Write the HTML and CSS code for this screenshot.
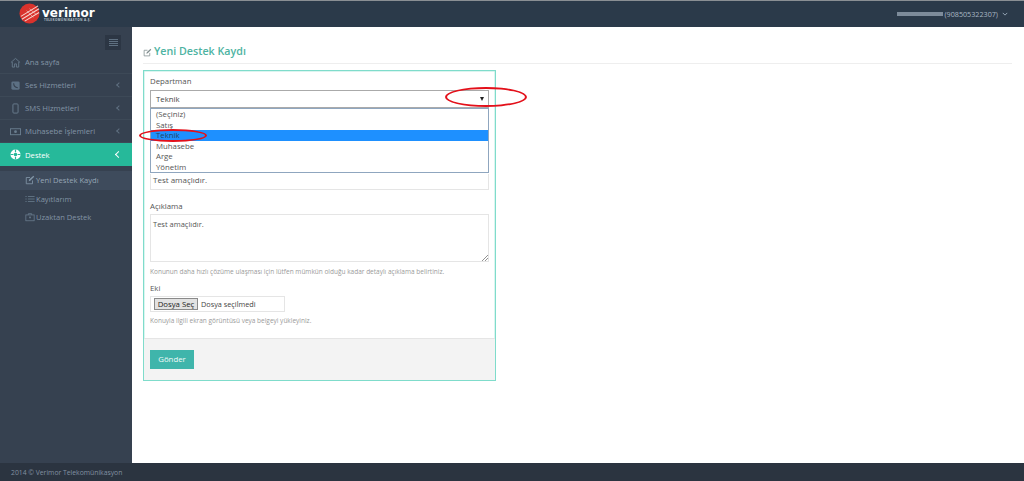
FILE: index.html
```html
<!DOCTYPE html>
<html lang="tr">
<head>
<meta charset="utf-8">
<title>Yeni Destek Kaydı</title>
<link rel="stylesheet" href="styles.css">
</head>
<body>
<div class="app">
  <header class="topbar">
    <div class="logo">
      <svg class="logo-mark" viewBox="0 0 22 22" width="21" height="21">
        <circle cx="11" cy="11" r="10.5" fill="#d9322c"/>
        <path d="M2 14 L20 3 M3 17 L21 6 M6 19 L21 10" stroke="#f6d5cf" stroke-width="1.1" fill="none"/>
        <path d="M8 8 L15 15 M11 6 L18 12" stroke="#f6d5cf" stroke-width=".6" fill="none"/>
      </svg>
      <div class="logo-text">
        <span class="logo-name">verimor</span>
        <span class="logo-sub">TELEKOMÜNİKASYON A.Ş.</span>
      </div>
    </div>
    <div class="user">
      <span class="user-mask"></span><span class="user-num">(908505322307)</span>
      <svg class="user-caret" viewBox="0 0 8 5" width="6" height="4"><path d="M1 1 L4 4 L7 1" stroke="#9fb0bf" stroke-width="1.2" fill="none"/></svg>
    </div>
  </header>
  <div class="middle">
    <aside class="sidebar">
      <div class="toggler-row">
        <div class="toggler"><span></span><span></span><span></span><span></span></div>
      </div>
      <nav class="menu">
        <a class="item">
          <svg class="ic" viewBox="0 0 12 12"><path d="M1 6 L6 1.5 L11 6 M2.5 5.5 V11 H5 V7.5 H7 V11 H9.5 V5.5" fill="none" stroke="#6b7f90" stroke-width=".9"/></svg>
          <span>Ana sayfa</span>
        </a>
        <a class="item">
          <svg class="ic" viewBox="0 0 12 12"><rect x="1.5" y="1.5" width="9" height="9" rx="1.5" fill="#5c7084"/><path d="M4 3.5 C4 6 6 8 8.5 8.5" stroke="#364150" stroke-width="1.2" fill="none"/></svg>
          <span>Ses Hizmetleri</span><i class="chev"></i>
        </a>
        <a class="item">
          <svg class="ic" viewBox="0 0 12 12"><rect x="3.2" y="1" width="5.6" height="10" rx="1" fill="none" stroke="#6b7f90" stroke-width="1"/></svg>
          <span>SMS Hizmetleri</span><i class="chev"></i>
        </a>
        <a class="item">
          <svg class="ic" viewBox="0 0 12 12"><rect x=".5" y="3" width="11" height="6.5" fill="none" stroke="#6b7f90" stroke-width="1"/><circle cx="6" cy="6.2" r="1.5" fill="#6b7f90"/></svg>
          <span>Muhasebe İşlemleri</span><i class="chev"></i>
        </a>
        <a class="item active">
          <svg class="ic" viewBox="0 0 12 12"><circle cx="6" cy="6" r="5.5" fill="#fff"/><circle cx="6" cy="6" r="2" fill="#26b99a"/><path d="M6 .5 V3.5 M6 8.5 V11.5 M.5 6 H3.5 M8.5 6 H11.5" stroke="#26b99a" stroke-width="1.3"/></svg>
          <span>Destek</span><i class="chev"></i>
        </a>
      </nav>
      <ul class="submenu">
        <li class="sub current">
          <svg class="ic-sm" viewBox="0 0 12 12"><path d="M9 6.5 V10.5 H1.5 V3 H6" fill="none" stroke="#8296a8" stroke-width="1"/><path d="M4.5 7.5 L5 5.5 L10 1 L11 2.2 L6.3 7 Z" fill="#8296a8"/></svg>
          <span>Yeni Destek Kaydı</span>
        </li>
        <li class="sub">
          <svg class="ic-sm" viewBox="0 0 12 12"><path d="M.5 3 H2 M3.5 3 H11.5 M.5 6 H2 M3.5 6 H11.5 M.5 9 H2 M3.5 9 H11.5" stroke="#66798a" stroke-width="1"/></svg>
          <span>Kayıtlarım</span>
        </li>
        <li class="sub">
          <svg class="ic-sm" viewBox="0 0 12 12"><rect x="1" y="3.5" width="10" height="7" fill="none" stroke="#66798a" stroke-width="1"/><path d="M4 3.5 V2 H8 V3.5" fill="none" stroke="#66798a"/><rect x="5" y="5.5" width="2" height="2" fill="#66798a"/></svg>
          <span>Uzaktan Destek</span>
        </li>
      </ul>
    </aside>
    <main class="content">
      <h1 class="page-title">
        <svg class="title-ic" viewBox="0 0 12 12"><path d="M9 6.5 V10.5 H1.5 V3 H6" fill="none" stroke="#7f8c8d" stroke-width="1"/><path d="M4.5 7.5 L5 5.5 L10 1 L11 2.2 L6.3 7 Z" fill="#7f8c8d"/></svg>
        Yeni Destek Kaydı
      </h1>
      <form class="box">
        <div class="body">
          <label class="lbl">Departman</label>
          <div class="select-wrap">
            <div class="select"><span>Teknik</span><i class="arrow"></i></div>
            <ul class="options">
              <li>(Seçiniz)</li>
              <li>Satış</li>
              <li class="sel">Teknik</li>
              <li>Muhasebe</li>
              <li>Arge</li>
              <li>Yönetim</li>
            </ul>
          </div>
          <div class="subject">Test amaçlıdır.</div>
          <label class="lbl lbl-desc">Açıklama</label>
          <div class="textarea">Test amaçlıdır.
            <svg class="grip" viewBox="0 0 7 7" width="7" height="7"><path d="M1 7 L7 1 M4 7 L7 4" stroke="#777" stroke-width=".8"/></svg>
          </div>
          <p class="help help-a">Konunun daha hızlı çözüme ulaşması için lütfen mümkün olduğu kadar detaylı açıklama belirtiniz.</p>
          <label class="lbl lbl-eki">Eki</label>
          <div class="file"><span class="file-btn">Dosya Seç</span><span class="file-txt">Dosya seçilmedi</span></div>
          <p class="help help-b">Konuyla ilgili ekran görüntüsü veya belgeyi yükleyiniz.</p>
        </div>
        <div class="actions"><span class="send">Gönder</span></div>
      </form>
    </main>
  </div>
  <footer class="foot">2014 © Verimor Telekomünikasyon</footer>
  <span class="mark mark-arrow"></span>
  <span class="mark mark-opt"></span>
</div>
</body>
</html>
```
FILE: styles.css
```css
* { box-sizing: border-box; }
html, body { margin: 0; padding: 0; height: 100%; }
body { font-family: "Open Sans", sans-serif; font-size: 7.8px; color: #555; background: #fff; overflow: hidden; }
.app { position: relative; height: 481px; display: flex; flex-direction: column; }

.topbar { height: 27px; flex: none; background: #2b3a4a; border-top: 1px solid #8a8f94; display: flex; justify-content: space-between; align-items: center; padding: 0 16px 0 19px; }
.logo { display: flex; align-items: center; gap: 2px; }
.logo-mark { display: block; margin-top: -1px; }
.logo-text { display: flex; flex-direction: column; line-height: 1; }
.logo-name { font-family: "DejaVu Sans", sans-serif; font-weight: 700; font-size: 12px; color: #fff; height: 12px; letter-spacing: 0; }
.logo-sub { font-family: "Open Sans", sans-serif; font-weight: 700; font-size: 3px; letter-spacing: .42px; color: #b9c2cb; margin-left: 2px; }
.user { display: flex; align-items: center; color: #a9b7c3; font-size: 7.2px; }
.user-mask { width: 46px; height: 4px; background: #7d8b9a; margin-right: 1px; }
.user-caret { margin-left: 4px; }

.middle { flex: 1; display: flex; min-height: 0; }
.sidebar { width: 132px; flex: none; background: #364150; }
.toggler-row { display: flex; justify-content: flex-end; padding: 8px 11px 0 0; height: 24px; }
.toggler { width: 16px; height: 15px; background: #2c3644; display: flex; flex-direction: column; justify-content: center; align-items: center; gap: 1px; }
.toggler span { width: 9px; height: 1px; background: #5f7081; }
.menu { display: flex; flex-direction: column; }
.item { height: 23px; display: flex; align-items: center; color: #8294a5; padding-left: 10px; border-bottom: 1px solid #3d4957; position: relative; font-size: 7.7px; }
.item .ic { width: 11px; height: 11px; margin-right: 4px; flex: none; }
.item > span { flex: 1; }
.chev { width: 4px; height: 4px; border-left: 1px solid #5f7081; border-bottom: 1px solid #5f7081; transform: rotate(45deg); margin-right: 11px; }
.item.active { background: #26b99a; color: #fff; border-bottom: 0; }
.item.active .chev { border-color: #fff; border-width: 1.5px; width: 5px; height: 5px; }
.submenu { list-style: none; margin: 5px 0 0; padding: 0; }
.sub { height: 18.5px; display: flex; align-items: center; padding-left: 25px; color: #8294a5; font-size: 7.6px; }
.sub.current { background: #3e4b5c; color: #96a6b5; }
.ic-sm { width: 10px; height: 10px; margin-right: 1px; flex: none; }

.content { flex: 1; padding: 17px 12px 0 11px; min-width: 0; }
.page-title { margin: 0; height: 20px; border-bottom: 1px solid #eee; font-size: 10.7px; font-weight: 600; color: #4db3a2; display: flex; align-items: flex-start; gap: 2px; line-height: 14px; }
.title-ic { width: 9px; height: 9px; margin-top: 4px; flex: none; }
.box { margin-top: 6px; width: 353px; height: 311px; border: 1px solid #7fdccb; box-shadow: inset 0 0 0 .5px #b8ece2; display: flex; flex-direction: column; }
.body { flex: 1; padding: 5px 6px 0; }
.lbl { display: block; font-size: 7.8px; line-height: 10px; color: #555; }
.select-wrap { position: relative; margin-top: 4px; height: 18px; width: 339px; }
.select { height: 18px; border: 1px solid #aaa; padding-left: 5px; display: flex; align-items: center; justify-content: space-between; color: #444; }
.arrow { width: 0; height: 0; border-left: 2.5px solid transparent; border-right: 2.5px solid transparent; border-top: 4px solid #222; margin-right: 4px; }
.options { position: absolute; left: 0; right: 0; top: 18px; height: 65px; margin: 0; padding: 0; list-style: none; background: #fff; border: 1px solid #8fa6bf; color: #555; }
.options li { height: 10.6px; line-height: 10.6px; padding-left: 5px; }
.options li.sel { background: #1e90ff; color: #26425c; }
.subject { margin-top: 66px; height: 16px; width: 339px; border: 1px solid #e5e5e5; border-top: 0; padding: 1px 2px; line-height: 10px; font-size: 8px; color: #555; }
.lbl-desc { margin-top: 11px; }
.textarea { position: relative; margin-top: 3px; height: 48px; width: 339px; border: 1px solid #e5e5e5; padding: 4px 2px; font-size: 7.5px; line-height: 10px; color: #555; }
.grip { position: absolute; right: 0; bottom: 0; }
.help { margin: 0; font-size: 6.5px; line-height: 8px; color: #9a9a9a; }
.help-a { margin-top: 6px; }
.lbl-eki { margin-top: 7px; }
.file { margin-top: 3px; width: 135px; height: 16px; border: 1px solid #e5e5e5; display: flex; align-items: center; padding-left: 3px; }
.file-btn { width: 44px; height: 12px; background: #e2e2e2; border: 1px solid #8a8a8a; color: #222; font-size: 7.8px; line-height: 10px; text-align: center; }
.file-txt { margin-left: 3px; font-size: 7.3px; color: #444; }
.help-b { margin-top: 5px; }
.actions { height: 42px; flex: none; background: #f3f3f3; border-top: 1px solid #e5e5e5; padding: 11px 6px 0; }
.send { display: block; width: 44px; height: 19px; background: #3fb5ab; color: #f3fbfa; line-height: 19px; text-align: center; font-size: 7.8px; }

.foot { height: 18px; flex: none; background: #2b3440; color: #8290a0; padding-left: 11px; line-height: 19px; font-size: 6.8px; }

.mark { position: absolute; border: 2.5px solid #e3101a; border-radius: 50%; }
.mark-arrow { left: 445px; top: 87px; width: 82px; height: 20px; }
.mark-opt { left: 139px; top: 129px; width: 68px; height: 13px; }
```
